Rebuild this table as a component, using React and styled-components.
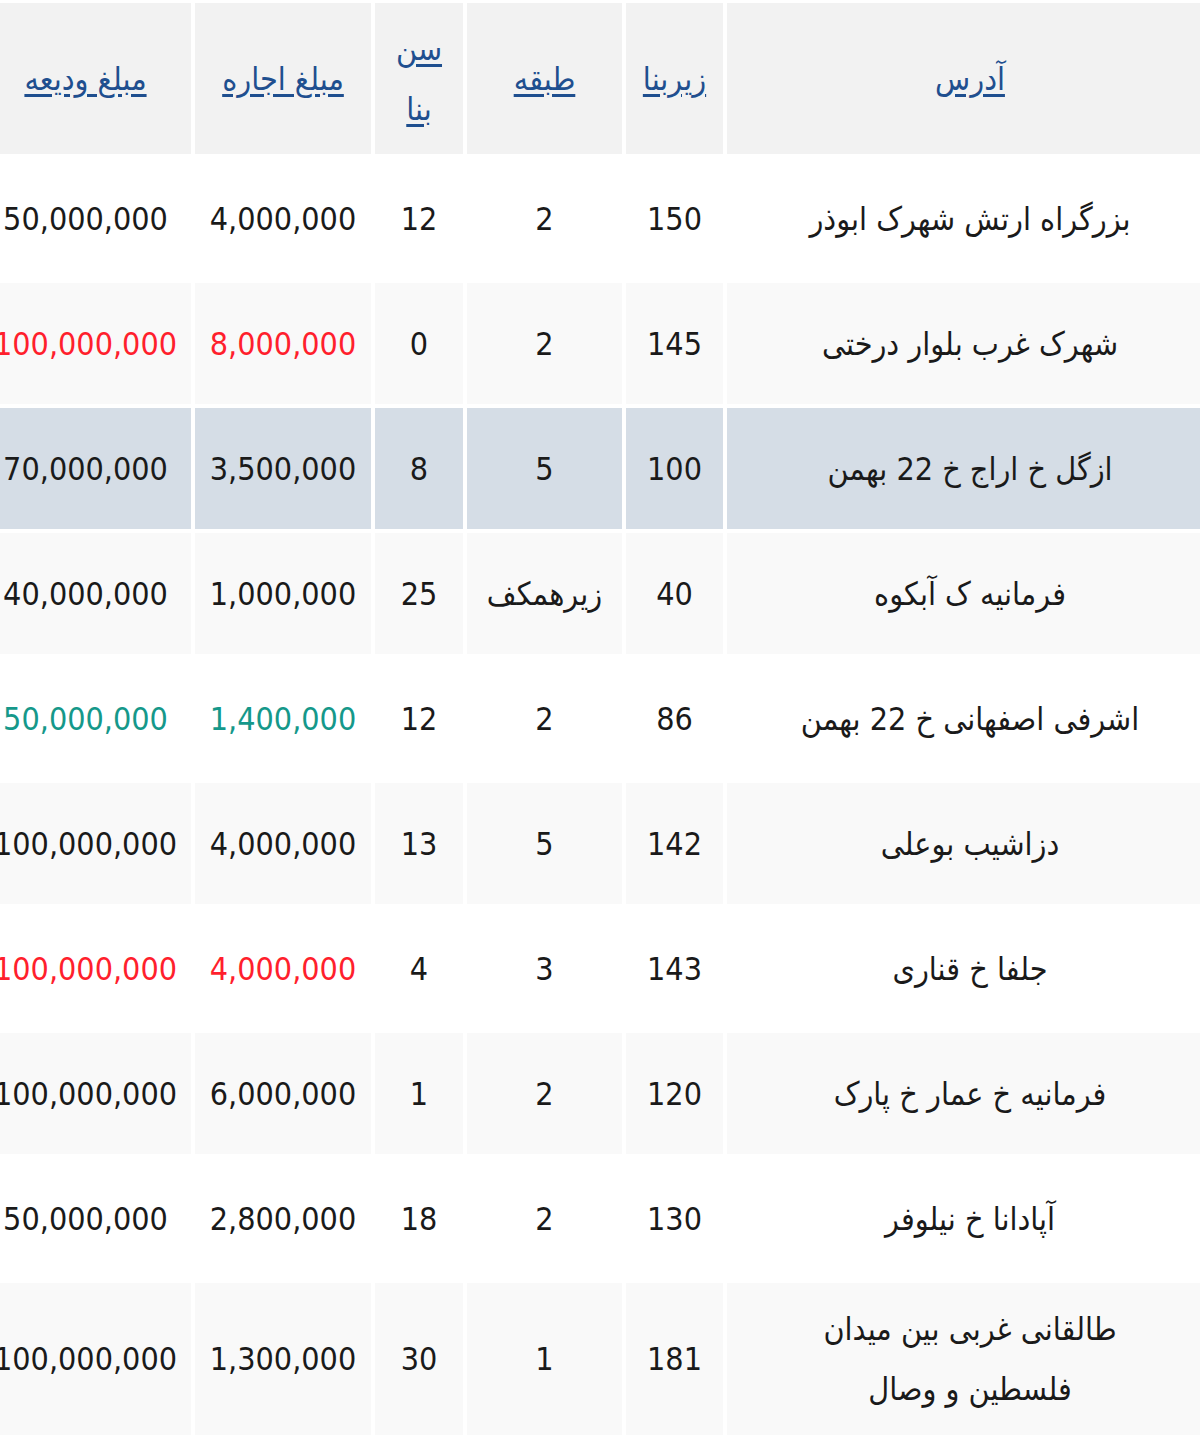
import React from 'react';
import styled, { createGlobalStyle } from 'styled-components';

const Global = createGlobalStyle`
  html, body { margin: 0; padding: 0; background: #ffffff; }
  body { font-family: "DejaVu Sans Condensed", "DejaVu Sans", Tahoma, sans-serif; }
`;

const Viewport = styled.div`
  width: 1200px;
  overflow: hidden;
  direction: rtl;
`;

const Table = styled.table`
  width: 1241px;
  margin-right: -17px;
  margin-top: -1px;
  border-collapse: separate;
  border-spacing: 4px;
  table-layout: fixed;
  font-size: 32px;
  line-height: 60px;
  color: #1a1a1a;
`;

const HeadRow = styled.tr`
  height: 151px;
`;

const HeadCell = styled.th`
  background: #f2f2f2;
  padding: 15px 8px;
  font-weight: normal;
  text-align: center;
  vertical-align: middle;
`;

const SortLink = styled.a`
  color: #1f4f8f;
  text-decoration: underline;
  text-underline-offset: 4px;
  cursor: pointer;
`;

const tones = {
  plain: '#ffffff',
  alt: '#f9f9f9',
  hover: '#d5dde6',
};

const Row = styled.tr`
  height: 121px;
  & > td { background: ${(p) => tones[p.$tone]}; }
`;

const accents = {
  none: 'inherit',
  red: '#ff1f2d',
  green: '#15988a',
};

const Cell = styled.td`
  padding: 16px 8px;
  text-align: center;
  vertical-align: middle;
  white-space: nowrap;
  color: ${(p) => accents[p.$accent || 'none']};
`;

const AddressCell = styled.td`
  padding: 16px 62px;
  text-align: center;
  vertical-align: middle;
`;

const rows = [
  ['بزرگراه ارتش شهرک ابوذر', '150', '2', '12', '4,000,000', '50,000,000', 'none'],
  ['شهرک غرب بلوار درختی', '145', '2', '0', '8,000,000', '100,000,000', 'red'],
  ['ازگل خ اراج خ 22 بهمن', '100', '5', '8', '3,500,000', '70,000,000', 'none'],
  ['فرمانیه ک آبکوه', '40', 'زیرهمکف', '25', '1,000,000', '40,000,000', 'none'],
  ['اشرفی اصفهانی خ 22 بهمن', '86', '2', '12', '1,400,000', '50,000,000', 'green'],
  ['دزاشیب بوعلی', '142', '5', '13', '4,000,000', '100,000,000', 'none'],
  ['جلفا خ قناری', '143', '3', '4', '4,000,000', '100,000,000', 'red'],
  ['فرمانیه خ عمار خ پارک', '120', '2', '1', '6,000,000', '100,000,000', 'none'],
  ['آپادانا خ نیلوفر', '130', '2', '18', '2,800,000', '50,000,000', 'none'],
  ['طالقانی غربی بین میدان فلسطین و وصال', '181', '1', '30', '1,300,000', '100,000,000', 'none'],
];

const headers = ['آدرس', 'زیربنا', 'طبقه', 'سن بنا', 'مبلغ اجاره', 'مبلغ ودیعه'];
const widths = [486, 97, 155, 88, 176, 211];

export default function App() {
  return (
    <>
      <Global />
      <Viewport>
        <Table>
          <colgroup>
            {widths.map((w, i) => (
              <col key={i} style={{ width: w }} />
            ))}
          </colgroup>
          <thead>
            <HeadRow>
              {headers.map((h) => (
                <HeadCell key={h}>
                  <SortLink>{h}</SortLink>
                </HeadCell>
              ))}
            </HeadRow>
          </thead>
          <tbody>
            {rows.map((r, i) => {
              const tone = i === 2 ? 'hover' : i % 2 === 1 ? 'alt' : 'plain';
              return (
                <Row key={i} $tone={tone}>
                  <AddressCell>{r[0]}</AddressCell>
                  <Cell>{r[1]}</Cell>
                  <Cell>{r[2]}</Cell>
                  <Cell>{r[3]}</Cell>
                  <Cell $accent={r[6]}>{r[4]}</Cell>
                  <Cell $accent={r[6]}>{r[5]}</Cell>
                </Row>
              );
            })}
          </tbody>
        </Table>
      </Viewport>
    </>
  );
}
